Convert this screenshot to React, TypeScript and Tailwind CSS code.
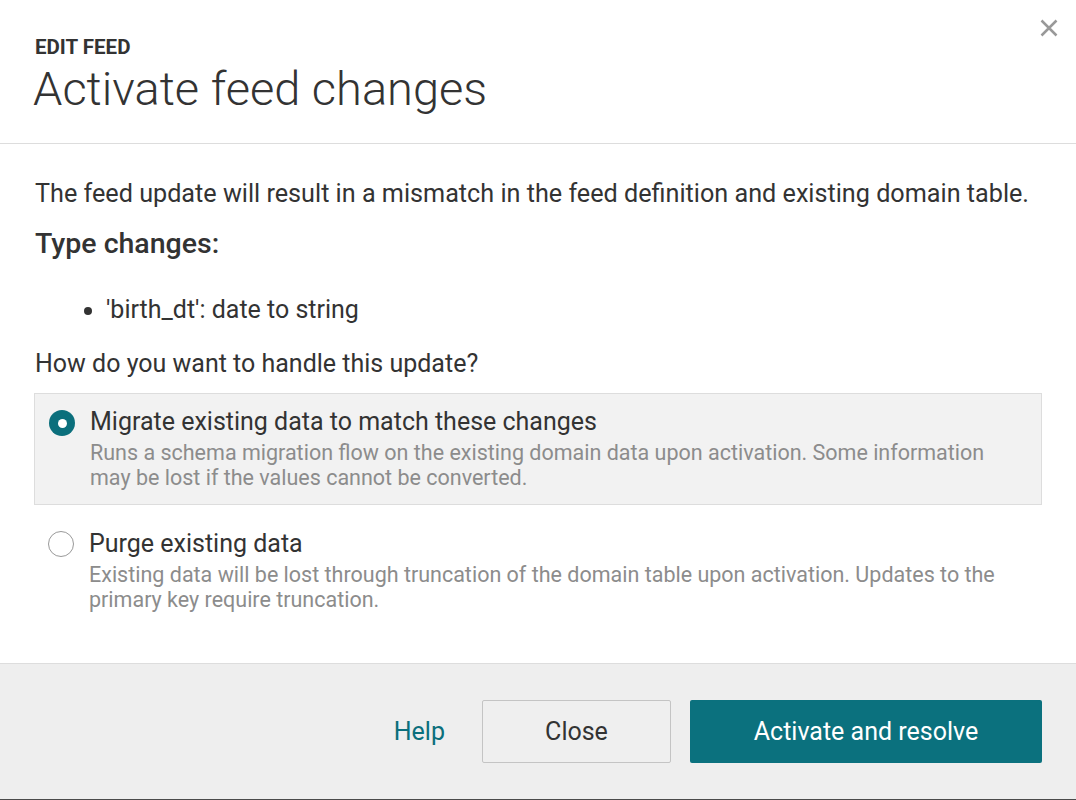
import React from "react";

export default function App() {
  return (
    <div className="w-[1076px] h-[800px] bg-white flex flex-col text-[#333333]" style={{ fontFamily: "Roboto, 'Noto Sans', sans-serif" }}>
      <div className="relative h-[144px] border-b border-[#dddddd] px-[35px] pt-[35px]">
        <div className="text-[20.5px] font-bold leading-[24px] uppercase text-[#333333]">Edit feed</div>
        <div className="text-[47px] font-light leading-[54px] text-[#333333] -ml-[2px] mt-[3px]">Activate feed changes</div>
        <button className="absolute right-[14px] top-[15px] w-[26px] h-[26px] flex items-center justify-center text-[#999999]">
          <svg width="18" height="18" viewBox="0 0 18 18" fill="none" stroke="currentColor" strokeWidth="2.5">
            <path d="M1.5 1.5 L16.5 16.5 M16.5 1.5 L1.5 16.5" />
          </svg>
        </button>
      </div>
      <div className="flex-1 px-[34px] pt-[35px]">
        <p className="text-[25.2px] leading-[30px] pl-[1px]">The feed update will result in a mismatch in the feed definition and existing domain table.</p>
        <h3 className="text-[28.5px] font-medium leading-[32px] mt-[19px] pl-[1px]">Type changes:</h3>
        <ul className="mt-[35px] pl-[72px] list-disc text-[25px] leading-[30px]">
          <li>'birth_dt': date to string</li>
        </ul>
        <p className="text-[25px] leading-[30px] mt-[24px] pl-[1px]">How do you want to handle this update?</p>
        <div className="mt-[14px] flex flex-col">
          <div className="flex gap-[15px] bg-[#f2f2f2] border border-[#dddddd] pl-[14px] pr-[20px] pt-[13px] h-[112px]">
            <div className="mt-[3px] w-[26px] h-[26px] rounded-full bg-[#0b6f7c] flex items-center justify-center shrink-0">
              <div className="w-[9px] h-[9px] rounded-full bg-white" />
            </div>
            <div>
              <div className="text-[25px] leading-[30px] text-[#333333]">Migrate existing data to match these changes</div>
              <div className="text-[21.5px] leading-[25px] text-[#8c8c8c] mt-[3px]">Runs a schema migration flow on the existing domain data upon activation. Some information may be lost if the values cannot be converted.</div>
            </div>
          </div>
          <div className="flex gap-[15px] pl-[14px] pr-[20px] pt-[24px]">
            <div className="mt-[2px] w-[26px] h-[26px] rounded-full bg-white border border-[#999999] shrink-0" />
            <div>
              <div className="text-[25px] leading-[30px] text-[#333333]">Purge existing data</div>
              <div className="text-[21.5px] leading-[25px] text-[#8c8c8c] mt-[3px]">Existing data will be lost through truncation of the domain table upon activation. Updates to the primary key require truncation.</div>
            </div>
          </div>
        </div>
      </div>
      <div className="h-[137px] bg-[#eeeeee] border-t border-[#dddddd] border-b border-b-[#4a4a4a] flex items-center justify-end pr-[34px] gap-[19px]">
        <a className="text-[25px] text-[#0b6f7c] mr-[18px]">Help</a>
        <button className="w-[189px] h-[63px] border border-[#c4c4c4] bg-[#efefef] text-[25px] text-[#333333] rounded-[2px]">Close</button>
        <button className="w-[352px] h-[63px] bg-[#0b717e] text-white text-[25px] font-normal rounded-[2px]">Activate and resolve</button>
      </div>
    </div>
  );
}
